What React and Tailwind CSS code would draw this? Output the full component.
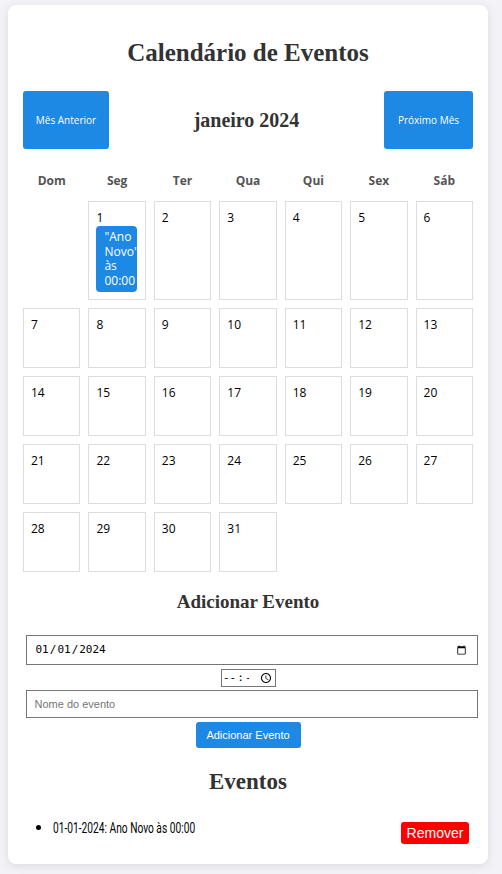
import React from "react";

const days = ["Dom", "Seg", "Ter", "Qua", "Qui", "Sex", "Sáb"];

export default function App() {
  const cells = [null];
  for (let d = 1; d <= 31; d++) cells.push(d);
  const ui = { fontFamily: "'Open Sans', 'DejaVu Sans', sans-serif" };
  const serif = { fontFamily: "'Liberation Serif', 'DejaVu Serif', serif" };
  return (
    <div className="min-h-[874px] bg-[#f2f2f7] pt-[5px]" style={ui}>
      <div className="ml-[8px] w-[480px] rounded-[8px] bg-white px-[15px] pb-[20px] pt-[20px] shadow-[0_2px_8px_rgba(0,0,0,0.1)]">
        <h1 className="mt-[12px] text-center text-[25px] font-bold leading-[32px] text-[#333]" style={serif}>
          Calendário de Eventos
        </h1>
        <div className="mt-[22px] flex items-center justify-between">
          <button className="h-[58px] w-[86px] rounded-[3px] bg-[#1e88e5] text-[10px] text-white">Mês Anterior</button>
          <h2 className="text-[20px] font-bold text-[#333]" style={serif}>janeiro 2024</h2>
          <button className="h-[58px] w-[89px] rounded-[3px] bg-[#1e88e5] text-[10px] text-white">Próximo Mês</button>
        </div>
        <div className="mt-[20px] grid grid-cols-7 gap-[8px]">
          {days.map((d) => (
            <div key={d} className="h-[24px] text-center text-[12px] font-bold leading-[24px] text-[#555]">
              {d}
            </div>
          ))}
          {cells.map((d, i) =>
            d === null ? (
              <div key={i} />
            ) : (
              <div key={i} className="min-h-[60px] border border-[#ddd] p-[7px] text-[12px] leading-[17px] text-black">
                <div>{d}</div>
                {d === 1 && (
                  <div className="w-[41px] rounded-[4px] bg-[#1e88e5] px-[8px] py-[4px] text-[12px] leading-[14.5px] text-white whitespace-nowrap">
                    <div>"Ano</div>
                    <div>Novo"</div>
                    <div>às</div>
                    <div>00:00</div>
                  </div>
                )}
              </div>
            )
          )}
        </div>
        <h2 className="mt-[19px] text-center text-[19px] font-bold leading-[22px] text-[#333]" style={serif}>
          Adicionar Evento
        </h2>
        <div className="mt-[22px] flex flex-col items-center">
          <input
            type="date"
            defaultValue="2024-01-01"
            className="ml-[7px] h-[30px] w-[452px] border border-[#767676] px-[8px] text-[11px] text-black"
            style={{ fontFamily: "'DejaVu Sans Mono', monospace" }}
          />
          <input
            type="time"
            className="mt-[4px] ml-[1px] h-[18px] w-[55px] border border-[#767676] text-[11px]"
            style={{ fontFamily: "'DejaVu Sans Mono', monospace" }}
          />
          <input
            type="text"
            placeholder="Nome do evento"
            className="ml-[7px] mt-[3px] h-[28px] w-[452px] border border-[#767676] px-[8px] text-[11px] placeholder:text-[#757575]"
            style={{ fontFamily: "'Liberation Sans', Arial, sans-serif" }}
          />
          <button
            className="mt-[4px] h-[26px] w-[105px] rounded-[3px] bg-[#1e88e5] text-[11px] text-white"
            style={{ fontFamily: "'Liberation Sans', Arial, sans-serif" }}
          >
            Adicionar Evento
          </button>
        </div>
        <h2 className="mt-[21px] text-center text-[23px] font-bold leading-[26px] text-[#333]" style={serif}>
          Eventos
        </h2>
        <ul className="mt-[22px] list-disc pl-[30px]">
          <li className="text-[14px] text-black">
            <div className="flex items-start justify-between">
              <span
                className="inline-block origin-left scale-x-[0.68] whitespace-nowrap text-[15px] leading-[18px]"
                style={{ fontFamily: "Roboto, 'DejaVu Sans', sans-serif" }}
              >
                01-01-2024: Ano Novo às 00:00
              </span>
              <button
                className="mt-[3px] mr-[4px] h-[22px] w-[68px] rounded-[3px] bg-[#ff0000] text-[14px] text-white"
                style={{ fontFamily: "'Liberation Sans', Arial, sans-serif" }}
              >
                Remover
              </button>
            </div>
          </li>
        </ul>
      </div>
    </div>
  );
}
